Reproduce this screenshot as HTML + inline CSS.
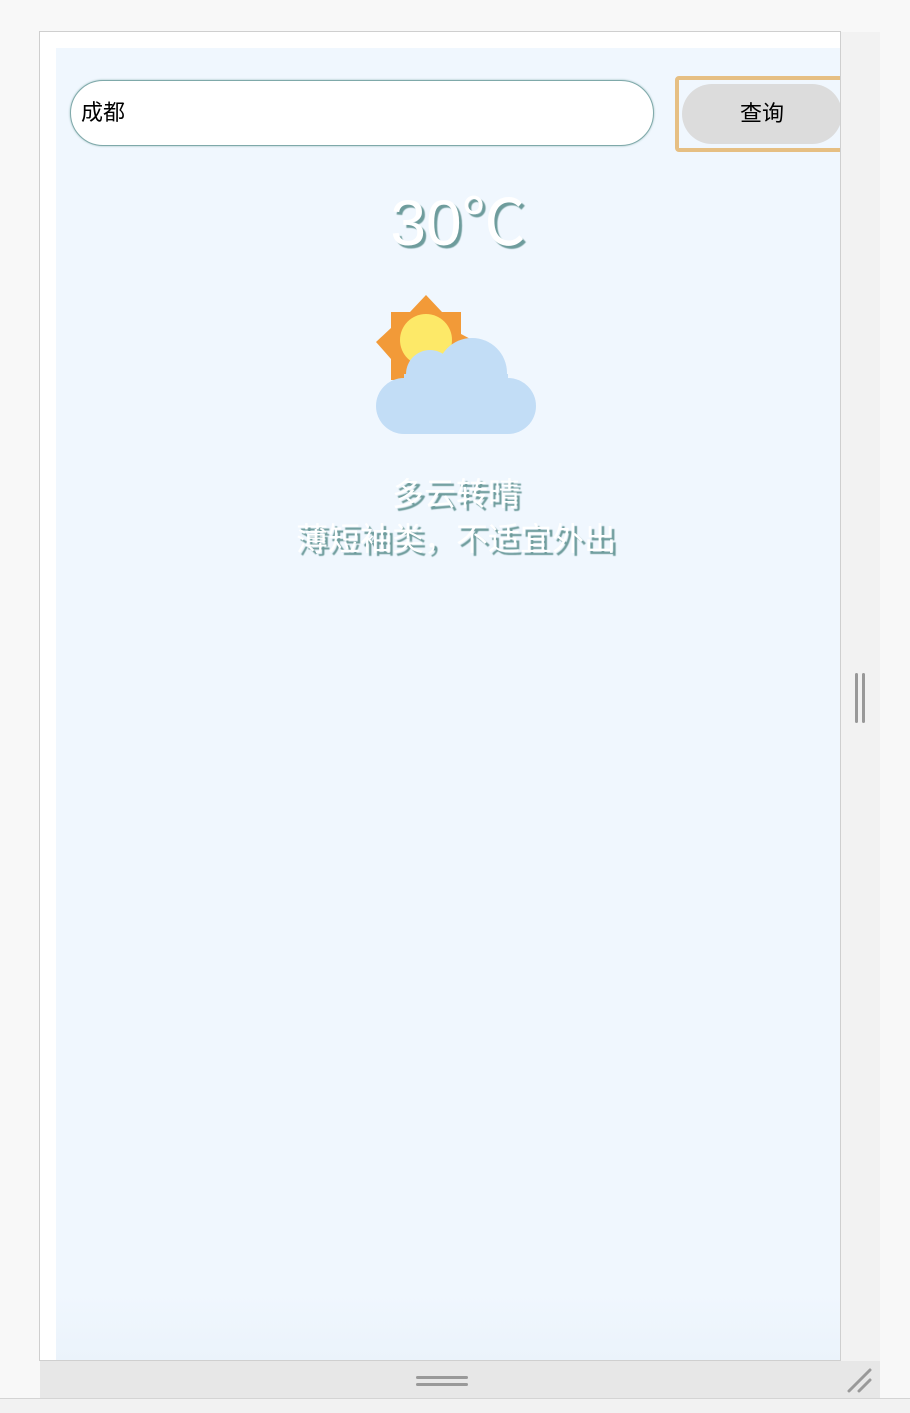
<!DOCTYPE html>
<html><head><meta charset="utf-8"><style>
html,body{margin:0;padding:0;}
body{width:910px;height:1412px;position:relative;overflow:hidden;background:#f8f8f8;font-family:"Liberation Sans","Noto Sans CJK SC",sans-serif;}
.frame{position:absolute;left:39px;top:31px;width:800px;height:1328px;background:#fff;border:1px solid #cfcfcf;overflow:hidden;}
.inner{position:absolute;left:16px;top:16px;right:0;bottom:0;background:linear-gradient(#f0f7fe 0,#f0f7fe 95%,#ebf3fb 100%);}
.side{position:absolute;left:841px;top:32px;width:39px;height:1329px;background:#f2f2f2;}
.bar{position:absolute;left:40px;top:1361px;width:840px;height:37px;background:#e7e7e7;}
.bottom{position:absolute;left:0;top:1398px;width:910px;height:14px;background:#f2f2f2;border-top:1px solid #d4d4d4;}
.inp{position:absolute;left:14px;top:32px;width:572px;height:64px;border:1.5px solid #7fa9aa;border-radius:34px;background:#fff;box-shadow:0 0 2px #9bb;font-size:22px;line-height:64px;padding-left:10px;box-sizing:content-box;}
.btnbox{position:absolute;left:619px;top:28px;width:170px;height:68px;border:4px solid #e6bf83;border-radius:4px;}
.btn{position:absolute;left:3px;top:4px;width:160px;height:60px;background:#dcdcdc;border-radius:30px;font-size:22px;line-height:60px;text-align:center;}
.t{position:absolute;left:10px;width:784px;text-align:center;color:#fff;text-shadow:3px 3px 1px #6e9c9c;}
</style></head><body>
<div class="frame"><div class="inner">
<div class="inp">成都</div>
<div class="btnbox"><div class="btn">查询</div></div>
<div class="t" style="top:135px;font-size:64px;line-height:80px;">30℃</div>
<div class="t" style="top:426px;left:8px;font-size:32px;line-height:40px;">多云转晴</div>
<div class="t" style="top:470px;left:8px;font-size:32px;line-height:42px;">薄短袖类，不适宜外出</div>
</div></div>
<svg style="position:absolute;left:0;top:0" width="910" height="500" viewBox="0 0 910 500">
<g transform="translate(56,48)">
<polygon fill="#f29a38" points="370,247 386,264 405,264 405,286 420,294 405,311 405,332 383,332 370,345 357,332 335,332 335,311 320,294 335,280 335,264 354,264"/>
<circle cx="370" cy="292" r="26" fill="#fde968"/>
</g>
<g fill="#c2ddf6">
<circle cx="404" cy="406" r="28"/>
<circle cx="508" cy="406" r="28"/>
<circle cx="472" cy="373" r="35"/>
<circle cx="430" cy="374" r="24"/>
<rect x="404" y="374" width="104" height="60"/>
</g>
</svg>
<div class="side"><div style="position:absolute;left:14px;top:641px;width:3px;height:50px;background:#999;border-radius:2px"></div><div style="position:absolute;left:21px;top:641px;width:3px;height:50px;background:#999;border-radius:2px"></div></div>
<div class="bar"><div style="position:absolute;left:376px;top:15px;width:52px;height:3px;background:#999;border-radius:2px"></div><div style="position:absolute;left:376px;top:22px;width:52px;height:3px;background:#999;border-radius:2px"></div>
<svg style="position:absolute;left:806px;top:6px" width="28" height="26"><line x1="3" y1="24" x2="24" y2="3" stroke="#999" stroke-width="3" stroke-linecap="round"/><line x1="13" y1="24" x2="24" y2="13" stroke="#999" stroke-width="3" stroke-linecap="round"/></svg></div>
<div class="bottom"></div>
</body></html>
